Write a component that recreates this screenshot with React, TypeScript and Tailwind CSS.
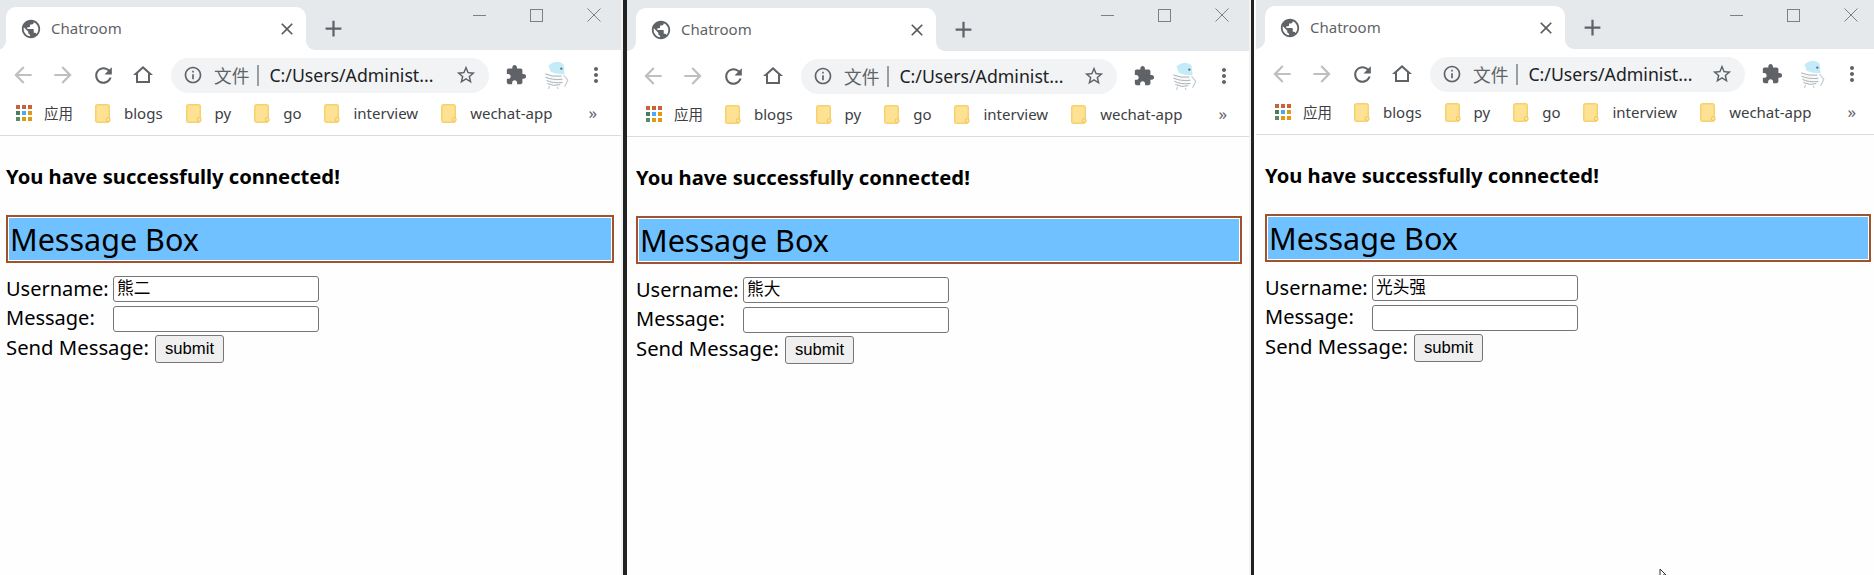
import React from "react";

const P = {
  globe: "M12 2C6.48 2 2 6.48 2 12s4.48 10 10 10 10-4.48 10-10S17.52 2 12 2zm-1 17.93c-3.95-.49-7-3.85-7-7.93 0-.62.08-1.21.21-1.79L9 15v1c0 1.1.9 2 2 2v1.93zm6.9-2.54c-.26-.81-1-1.39-1.9-1.39h-1v-3c0-.55-.45-1-1-1H8v-2h2c.55 0 1-.45 1-1V7h2c1.1 0 2-.9 2-2v-.41c2.93 1.19 5 4.06 5 7.41 0 2.08-.8 3.97-2.1 5.39z",
  close: "M19 6.41 17.59 5 12 10.59 6.41 5 5 6.41 10.59 12 5 17.59 6.41 19 12 13.41 17.59 19 19 17.59 13.41 12z",
  plus: "M19 13h-6v6h-2v-6H5v-2h6V5h2v6h6v2z",
  back: "M20 11H7.83l5.59-5.59L12 4l-8 8 8 8 1.41-1.41L7.83 13H20v-2z",
  forward: "M4 11h12.17l-5.59-5.59L12 4l8 8-8 8-1.41-1.41L16.17 13H4v-2z",
  reload: "M17.65 6.35C16.2 4.9 14.21 4 12 4c-4.42 0-7.99 3.58-7.99 8s3.57 8 7.99 8c3.73 0 6.84-2.55 7.73-6h-2.08c-.82 2.33-3.04 4-5.65 4-3.31 0-6-2.69-6-6s2.69-6 6-6c1.66 0 3.14.69 4.22 1.78L13 11h7V4l-2.35 2.35z",
  home: "M12 5.7l5 4.5V18H7v-7.8l5-4.5M12 3 2 12h3v8h14v-8h3L12 3z",
  info: "M11 7h2v2h-2zm0 4h2v6h-2zm1-9C6.48 2 2 6.48 2 12s4.48 10 10 10 10-4.48 10-10S17.52 2 12 2zm0 18c-4.41 0-8-3.59-8-8s3.59-8 8-8 8 3.59 8 8-3.59 8-8 8z",
  star: "M22 9.24l-7.19-.62L12 2 9.19 8.63 2 9.24l5.46 4.73L5.82 21 12 17.27 18.18 21l-1.63-7.03L22 9.24zM12 15.4l-3.76 2.27 1-4.28-3.32-2.88 4.38-.38L12 6.1l1.71 4.04 4.38.38-3.32 2.88 1 4.28L12 15.4z",
  puzzle: "M20.5 11H19V7c0-1.1-.9-2-2-2h-4V3.5C13 2.12 11.88 1 10.5 1S8 2.12 8 3.5V5H4c-1.1 0-1.99.9-1.99 2v3.8H3.5c1.49 0 2.7 1.21 2.7 2.7s-1.21 2.7-2.7 2.7H2V20c0 1.1.9 2 2 2h3.8v-1.5c0-1.49 1.21-2.7 2.7-2.7 1.49 0 2.7 1.21 2.7 2.7V22H17c1.1 0 2-.9 2-2v-4h1.5c1.38 0 2.5-1.12 2.5-2.5S21.88 11 20.5 11z",
  dots: "M12 8c1.1 0 2-.9 2-2s-.9-2-2-2-2 .9-2 2 .9 2 2 2zm0 2c-1.1 0-2 .9-2 2s.9 2 2 2 2-.9 2-2-.9-2-2-2zm0 6c-1.1 0-2 .9-2 2s.9 2 2 2 2-.9 2-2-.9-2-2-2z",
};

function Icon({ d, size = 24, color = "#5f6368" }: { d: string; size?: number; color?: string }) {
  return (
    <svg width={size} height={size} viewBox="0 0 24 24" fill={color} fillRule="evenodd" className="shrink-0">
      <path d={d} />
    </svg>
  );
}

function ToolButton({ d, color, size = 24 }: { d: string; color?: string; size?: number }) {
  return (
    <div className="flex h-full w-[40px] shrink-0 items-center justify-center">
      <Icon d={d} color={color} size={size} />
    </div>
  );
}

function Folder() {
  return (
    <svg width="16" height="19" viewBox="0 0 16 19" className="shrink-0">
      <rect x="0.75" y="0.75" width="13.5" height="17.5" rx="2" fill="#fde293" stroke="#f8d16f" strokeWidth="1.5" />
      <circle cx="13.2" cy="15.6" r="2" fill="#fde293" stroke="#f2c45c" strokeWidth="1" />
    </svg>
  );
}

function Avatar() {
  return (
    <svg width="28" height="30" viewBox="0 0 26 28" className="shrink-0">
      <path d="M6 5 Q13 -1 20 4 L21 13 Q14 14 8 11 Z" fill="#c3ecf8" />
      <path d="M3 12 Q8 15 18 14 L20 22 Q12 25 5 22 Z" fill="#f7f9fa" />
      <path d="M3 13 Q10 16 18 15 M3 16 Q10 19 19 18 M4 19 Q10 22 19 21 M5 22 Q11 25 17 23" fill="none" stroke="#aab1b5" strokeWidth="0.9" />
      <circle cx="18" cy="8" r="1.1" fill="#5d7480" />
      <path d="M20 14 L24 19 L21 25 M7 24 L6 27 M14 25 L15 27" fill="none" stroke="#c6ccd0" strokeWidth="1.1" />
    </svg>
  );
}

function Apps() {
  const colors = ["#c9623b", "#c9623b", "#d0603a", "#4a7d5c", "#4aa9f2", "#e09a12", "#5a8a6a", "#e09a12", "#e09a12"];
  return (
    <div className="grid w-[16px] shrink-0 grid-cols-3 gap-[2px]">
      {colors.map((c, i) => (
        <div key={i} className="h-[4px] w-[4px]" style={{ backgroundColor: c }} />
      ))}
    </div>
  );
}

function Bookmark({ label, className }: { label: string; className: string }) {
  return (
    <div className={"flex items-center gap-[13px] " + className}>
      <Folder />
      <span>{label}</span>
    </div>
  );
}

function BrowserWindow({
  outer,
  inner,
  strip,
  omni,
  name,
}: {
  outer: string;
  inner: string;
  strip: string;
  omni: string;
  name: string;
}) {
  return (
    <div className={"h-[575px] shrink-0 overflow-hidden bg-[#fefefe] " + outer}>
      <div className={"flex flex-col " + inner}>
        {/* tab strip */}
        <div className={"flex items-end bg-[#e6e9ec] " + strip}>
          <div className="h-[10px] w-[9px] bg-white">
            <div className="h-full w-full rounded-br-[9px] bg-[#e6e9ec]" />
          </div>
          <div className="flex h-[43px] w-[300px] items-center rounded-t-[10px] bg-white pl-[14px] pr-[9px]">
            <Icon d={P.globe} size={22} />
            <span className="ml-[9px] text-[15px] text-[#5f6368]">Chatroom</span>
            <div className="ml-auto">
              <Icon d={P.close} size={20} color="#5a5d61" />
            </div>
          </div>
          <div className="h-[10px] w-[10px] bg-white">
            <div className="h-full w-full rounded-bl-[9px] bg-[#e6e9ec]" />
          </div>
          <div className="ml-[3px] flex h-[43px] w-[28px] items-center justify-center">
            <Icon d={P.plus} size={27} />
          </div>
          <div className="ml-auto mr-[3px] flex h-[30px] self-start">
            <div className="flex w-[57px] items-center justify-center">
              <div className="h-px w-[13px] bg-[#7d7f82]" />
            </div>
            <div className="flex w-[57px] items-center justify-center">
              <div className="h-[13px] w-[13px] border border-[#7d7f82]" />
            </div>
            <div className="flex w-[57px] items-center justify-center">
              <svg width="14" height="14" viewBox="0 0 14 14" stroke="#7d7f82" strokeWidth="1">
                <path d="M.5.5l13 13M13.5.5l-13 13" />
              </svg>
            </div>
          </div>
        </div>

        {/* toolbar */}
        <div className="flex h-[45px] items-center bg-white pl-[6px] pt-[5px]">
          <ToolButton d={P.back} color="#bdbfc1" size={26} />
          <ToolButton d={P.forward} color="#bdbfc1" size={26} />
          <ToolButton d={P.reload} color="#5f6368" size={25} />
          <ToolButton d={P.home} color="#5f6368" size={24} />
          <div className={"ml-[8px] flex h-[35px] shrink-0 items-center rounded-full bg-[#f1f3f4] pl-[12px] pr-[12px] text-[17.7px] " + omni}>
            <Icon d={P.info} size={20} />
            <span className="ml-[11px] text-[#5f6368] [font-family:'Noto_Sans_CJK_SC',sans-serif]">文件</span>
            <span className="ml-[8px] h-[21px] w-[2px] bg-[#9a9da1]" />
            <span className="ml-[10px] whitespace-nowrap text-[#202124]">C:/Users/Administ...</span>
            <div className="ml-auto">
              <Icon d={P.star} size={22} />
            </div>
          </div>
          <div className="ml-[7px] flex h-full items-center">
            <ToolButton d={P.puzzle} size={22} />
            <div className="flex h-full w-[40px] items-center justify-center">
              <Avatar />
            </div>
            <ToolButton d={P.dots} size={24} />
          </div>
        </div>

        {/* bookmarks */}
        <div className="flex h-[41px] items-center border-b border-[#dadce0] bg-white pb-[4px] pl-[19px] text-[15px] text-[#3c4043]">
          <Apps />
          <span className="ml-[12px] text-[14.5px] [font-family:'Noto_Sans_CJK_SC',sans-serif]">应用</span>
          <Bookmark label="blogs" className="ml-[22px]" />
          <Bookmark label="py" className="ml-[23px]" />
          <Bookmark label="go" className="ml-[23px]" />
          <Bookmark label="interview" className="ml-[23px]" />
          <Bookmark label="wechat-app" className="ml-[23px]" />
          <span className="ml-[36px] text-[17px] text-[#5f6368]">»</span>
        </div>

        {/* page */}
        <div className="pl-[9px] pr-[11px] text-black">
          <div className="mt-[26px] h-[28px] whitespace-nowrap text-[20.2px] font-bold leading-[28px]">
            You have successfully connected!
          </div>
          <div className="mt-[25px] h-[48px] border-2 border-[#a0522d]">
            <div className="flex h-full items-center border border-white bg-[#70c1ff] pl-[1px] pt-[1px] text-[30.5px] leading-none">
              Message Box
            </div>
          </div>
          <div className="mt-[13px] flex flex-col text-[20px] leading-[26px]">
            <div className="flex h-[26px]">
              <span className="w-[107px] shrink-0">Username:</span>
              <input
                readOnly
                defaultValue={name}
                className="h-[26px] w-[206px] rounded-[3px] border border-[#767676] bg-white px-[3px] text-[16.67px] outline-none [font-family:'Liberation_Sans','Noto_Sans_CJK_SC',sans-serif]"
              />
            </div>
            <div className="mt-[4px] flex h-[26px]">
              <span className="w-[107px] shrink-0 leading-[23px]">Message:</span>
              <input
                readOnly
                className="h-[26px] w-[206px] rounded-[3px] border border-[#767676] bg-white px-[3px] text-[16px] outline-none"
              />
            </div>
            <div className="mt-[3px] flex h-[28px]">
              <span className="w-[149px] shrink-0 whitespace-nowrap text-[20.3px] leading-[24px]">Send Message:</span>
              <button className="h-[28px] w-[69px] rounded-[3px] border border-[#767676] bg-[#efefef] text-[16.67px] [font-family:'Liberation_Sans',sans-serif]">
                submit
              </button>
            </div>
          </div>
        </div>
      </div>
    </div>
  );
}

export default function App() {
  return (
    <div className="relative flex h-[575px] w-[1874px] overflow-hidden bg-[#222] [font-family:'Noto_Sans','Noto_Sans_CJK_SC',sans-serif]">
      <BrowserWindow outer="w-[623px] border-r-2 border-[#f2f2f2]" inner="-ml-[3px] w-[628px]" strip="h-[50px]" omni="w-[318px]" name="熊二" />
      <div className="ml-[3px]" />
      <BrowserWindow outer="ml-[1px] w-[624px] border-r-2 border-[#f2f2f2]" inner="w-[626px]" strip="h-[51px]" omni="w-[316px]" name="熊大" />
      <div className="ml-[3px]" />
      <BrowserWindow outer="w-[620px] flex-1" inner="ml-[2px] w-[626px]" strip="h-[49px]" omni="w-[315px]" name="光头强" />
      <svg width="9" height="11" viewBox="0 0 9 11" className="absolute left-[1659px] top-[569px]">
        <path d="M1 0v9l2-2 2 3 1-1-2-3h3z" fill="#fff" stroke="#333" strokeWidth="1" />
      </svg>
    </div>
  );
}
